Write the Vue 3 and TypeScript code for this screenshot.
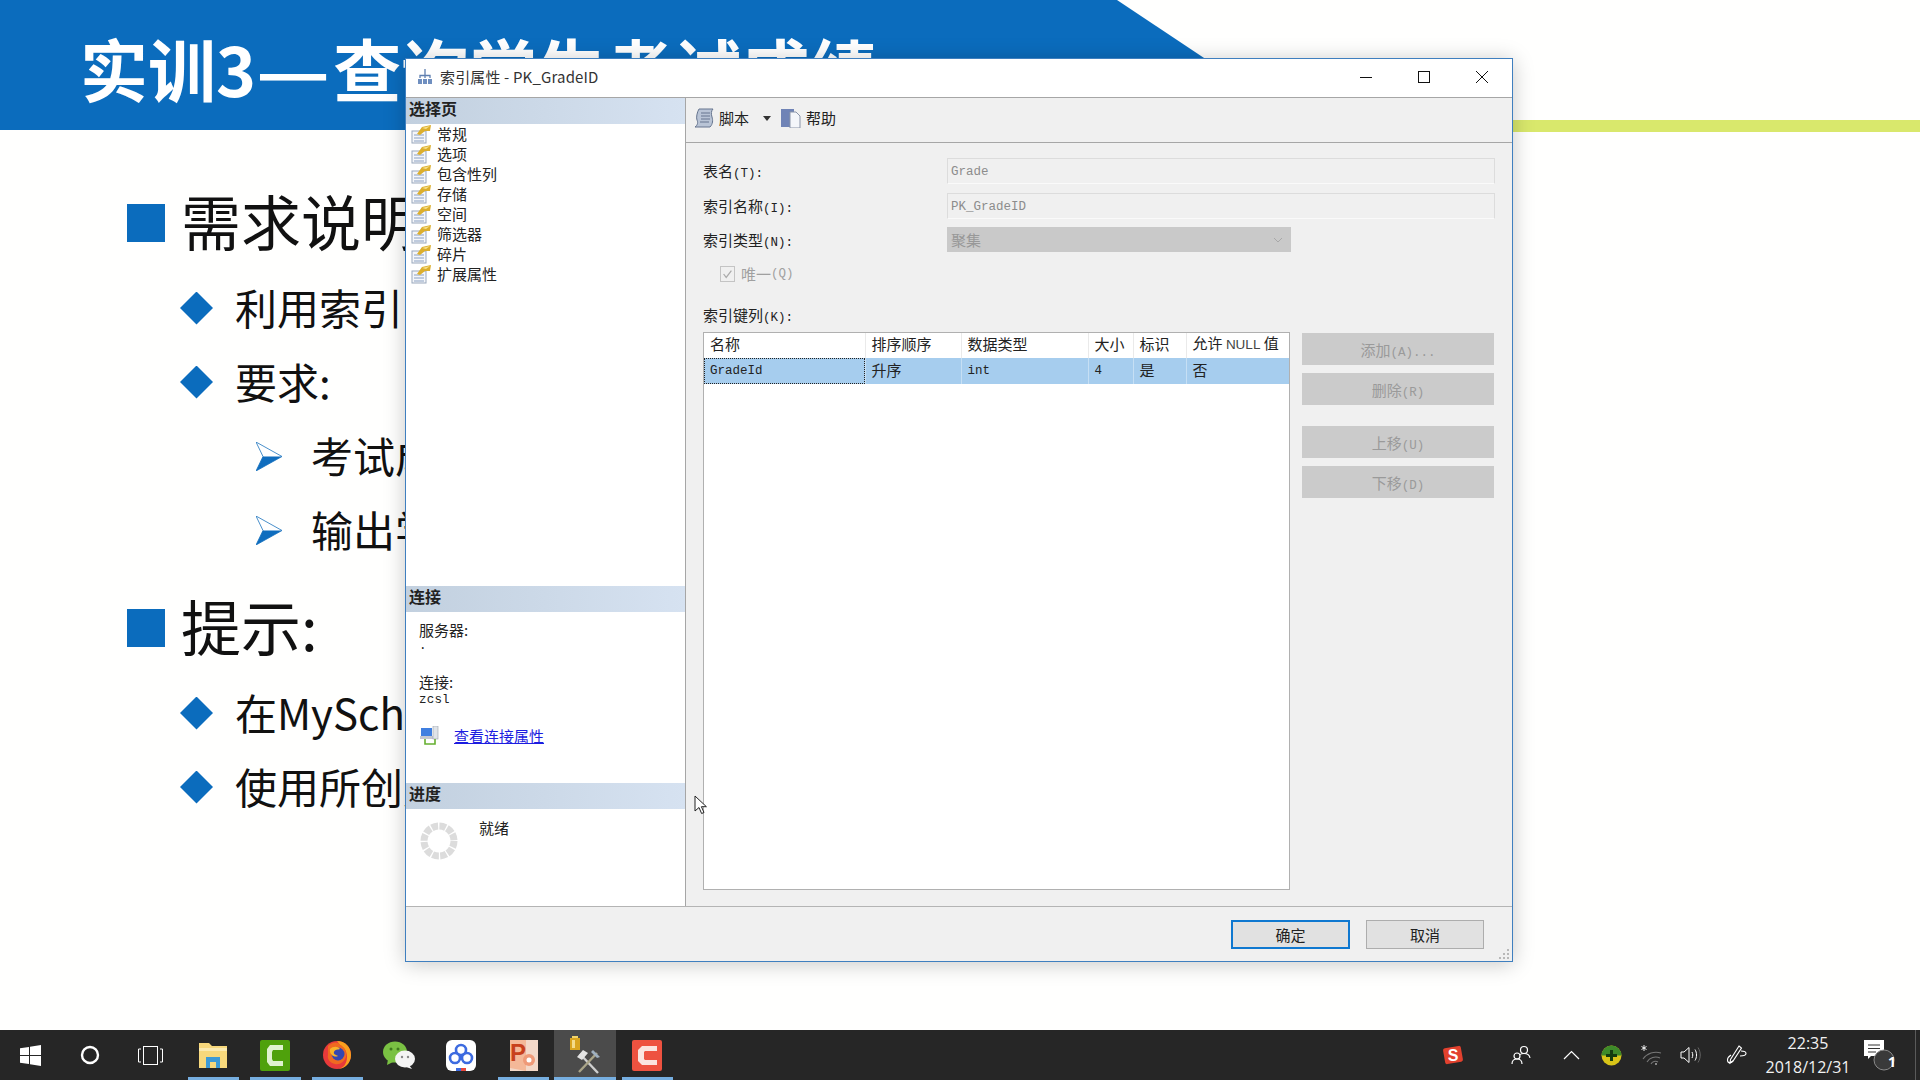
<script setup lang="ts">
interface Line { text: string; level: number }

const lines: Line[] = [
  { text: '需求说明', level: 1 },
  { text: '利用索引', level: 2 },
  { text: '要求:', level: 2 },
  { text: '考试成绩', level: 3 },
  { text: '输出学生', level: 3 },
  { text: '提示:', level: 1 },
  { text: '在MySchool', level: 2 },
  { text: '使用所创建', level: 2 },
]

const pages = ['常规', '选项', '包含性列', '存储', '空间', '筛选器', '碎片', '扩展属性']

const fields = [
  { label: '表名', key: '(T):', value: 'Grade' },
  { label: '索引名称', key: '(I):', value: 'PK_GradeID' },
]

const columns = ['名称', '排序顺序', '数据类型', '大小', '标识']
const sideButtons = [
  { text: '添加', key: '(A)...', gap: false },
  { text: '删除', key: '(R)', gap: false },
  { text: '上移', key: '(U)', gap: true },
  { text: '下移', key: '(D)', gap: false },
]
</script>

<template>
  <div class="screen">
    <main class="desk">
      <header class="head">
        <div class="lime"></div>
        <div class="blue">
          <h1>实训3<span class="dash">—</span>查询学生考试成绩</h1>
        </div>
      </header>

      <section class="slide">
        <div v-for="l in lines" :key="l.text" class="line" :class="'lv' + l.level">
          <span v-if="l.level === 1" class="mark-square"></span>
          <span v-else-if="l.level === 2" class="mark-diamond"></span>
          <svg v-else class="mark-arrow" viewBox="0 0 26 29">
            <path d="M0 0 L26 14.5 L0 29 L7 14.5 Z" fill="#fff" stroke="#1a72bd" stroke-width=".8" />
            <path d="M26 14.5 L0 29 L7 14.5 Z" fill="#0f6dbe" />
          </svg>
          <span class="line-text">{{ l.text }}</span>
        </div>
      </section>

      <div class="win">
        <div class="titlebar">
          <svg class="title-icon" viewBox="0 0 16 16">
            <path d="M8 0v6M3 9V6.500h10V9M8 6v3" fill="none" stroke="#5f7fb0" stroke-width="1.300" />
            <rect x="1" y="10" width="4" height="5" fill="#6f8fc0" />
            <rect x="6" y="10" width="4" height="5" fill="#6f8fc0" />
            <rect x="11" y="10" width="4" height="5" fill="#6f8fc0" />
          </svg>
          <span class="title-text">索引属性 - PK_GradeID</span>
          <div class="win-ctrls">
            <svg viewBox="0 0 12 12"><path d="M0 6.500h12" stroke="#111" fill="none" /></svg>
            <svg viewBox="0 0 12 12"><rect x=".5" y=".5" width="11" height="11" stroke="#111" fill="none" /></svg>
            <svg viewBox="0 0 12 12"><path d="M0 0l12 12M12 0L0 12" stroke="#111" fill="none" /></svg>
          </div>
        </div>

        <div class="win-body">
          <aside class="left">
            <div class="sec sec-pages">
              <div class="sec-head">选择页</div>
              <ul class="pages">
                <li v-for="p in pages" :key="p">
                  <svg class="page-icon" viewBox="0 0 20 20">
                    <rect x="1" y="7" width="14" height="12" fill="#f4f6fa" stroke="#9aa8bc" />
                    <path d="M3 11h10M3 14h10M3 17h10" stroke="#8aa0c0" />
                    <path d="M6 10 L11 3 L20 1 L19 7 L14 7 L9 11 Z" fill="#dcae2c" />
                    <path d="M11 4 L19 2 L15 5 Z" fill="#f6e08c" />
                  </svg>
                  <span>{{ p }}</span>
                </li>
              </ul>
            </div>

            <div class="sec sec-conn">
              <div class="sec-head">连接</div>
              <div class="conn">
                <div class="conn-label">服务器:</div>
                <div class="conn-value">.</div>
                <div class="conn-label conn-second">连接:</div>
                <div class="conn-value">zcsl</div>
                <div class="conn-link">
                  <svg viewBox="0 0 20 20">
                    <rect x="1" y="2" width="11" height="8" fill="#3f7fe0" />
                    <rect x="0" y="10" width="13" height="3" fill="#c4c8d0" />
                    <rect x="13" y="0" width="5" height="13" fill="#dfe3e8" stroke="#9aa0a8" stroke-width=".6" />
                    <path d="M5 13v5h10v-5" fill="none" stroke="#66b030" stroke-width="1.600" />
                  </svg>
                  <a>查看连接属性</a>
                </div>
              </div>
            </div>

            <div class="sec sec-prog">
              <div class="sec-head">进度</div>
              <div class="prog">
                <svg class="spinner" viewBox="0 0 38 38">
                  <circle cx="19" cy="19" r="15" fill="none" stroke="#dcdcdc" stroke-width="7" stroke-dasharray="6.500 1.350" />
                </svg>
                <span>就绪</span>
              </div>
            </div>
          </aside>

          <div class="right">
            <div class="toolbar">
              <svg class="tool-icon" viewBox="0 0 20 20">
                <path d="M5 1h14c-2 2-2 5-1 8s1 7-2 10H1c3-2 3-5 2-7S3 4 5 1z" fill="#b9c4d6" stroke="#66758f" />
                <path d="M7 5h9M7 8h9M7 11h9M6 14h9" stroke="#66758f" />
              </svg>
              <span>脚本</span>
              <i class="caret"></i>
              <svg class="tool-icon help-icon" viewBox="0 0 20 20">
                <rect x="0" y="1" width="13" height="18" fill="#6f83b6" />
                <path d="M9 4h6l4 4v12H9z" fill="#f4f6fa" stroke="#8a94a8" />
              </svg>
              <span>帮助</span>
            </div>

            <div class="form">
              <div class="fields">
                <template v-for="f in fields" :key="f.label">
                  <label>{{ f.label }}<span class="lat">{{ f.key }}</span></label>
                  <div class="input"><span class="lat">{{ f.value }}</span></div>
                </template>
                <label>索引类型<span class="lat">(N):</span></label>
                <div class="select">
                  <span>聚集</span>
                  <svg viewBox="0 0 10 6"><path d="M1 1l4 4 4-4" fill="none" stroke="#a8a8a8" /></svg>
                </div>
              </div>

              <div class="unique">
                <span class="check">
                  <svg viewBox="0 0 15 16"><path d="M3 8l3 4 6-8" fill="none" stroke="#aaa" stroke-width="1.400" /></svg>
                </span>
                唯一<span class="lat">(Q)</span>
              </div>

              <label class="keys-label">索引键列<span class="lat">(K):</span></label>

              <div class="keys">
                <div class="grid-box">
                  <table>
                    <colgroup>
                      <col style="width: 161px" />
                      <col style="width: 96px" />
                      <col style="width: 127px" />
                      <col style="width: 45px" />
                      <col style="width: 53px" />
                      <col />
                    </colgroup>
                    <thead>
                      <tr>
                        <th v-for="c in columns" :key="c">{{ c }}</th>
                        <th>允许 <span class="null">NULL</span> 值</th>
                      </tr>
                    </thead>
                    <tbody>
                      <tr>
                        <td class="focus"><span class="lat">GradeId</span></td>
                        <td>升序</td>
                        <td><span class="lat">int</span></td>
                        <td><span class="lat">4</span></td>
                        <td>是</td>
                        <td>否</td>
                      </tr>
                    </tbody>
                  </table>
                </div>
                <div class="side">
                  <button v-for="b in sideButtons" :key="b.text" :class="{ spaced: b.gap }">
                    {{ b.text }}<span class="lat">{{ b.key }}</span>
                  </button>
                </div>
              </div>
            </div>
          </div>
        </div>

        <footer class="win-foot">
          <button class="primary">确定</button>
          <button>取消</button>
          <svg class="grip" viewBox="0 0 12 12">
            <path d="M9 1h2v2H9zM5 5h2v2H5zM9 5h2v2H9zM1 9h2v2H1zM5 9h2v2H5zM9 9h2v2H9z" fill="#b8b8b8" />
          </svg>
        </footer>

        <svg class="pointer" viewBox="0 0 13 20">
          <path d="M1 1v15l4-3.500 2.600 6 2.400-1-2.600-5.800 5 0z" fill="#fff" stroke="#222" />
        </svg>
      </div>
    </main>

    <nav class="taskbar">
      <div class="tb sys">
        <svg width="21" height="21" viewBox="0 0 21 21">
          <path d="M0 3.200L9 2v8H0zM10 1.800L21 0v10H10zM0 11h9v8L0 17.800zM10 11h11v10l-11-1.800z" fill="#fff" />
        </svg>
      </div>
      <div class="tb sys">
        <svg width="20" height="20" viewBox="0 0 20 20"><circle cx="10" cy="10" r="8" fill="none" stroke="#fff" stroke-width="2.400" /></svg>
      </div>
      <div class="tb sys">
        <svg width="25" height="19" viewBox="0 0 25 19">
          <rect x="5.500" y=".5" width="14" height="18" fill="none" stroke="#fff" />
          <path d="M3 3H.5v13H3M22 3h2.500v13H22" fill="none" stroke="#fff" />
        </svg>
      </div>

      <div class="tb on">
        <svg width="30" height="30" viewBox="0 0 30 30">
          <path d="M1 3h10l3 3h15v22H1z" fill="#f7d87c" />
          <path d="M1 8h28v3H1z" fill="#fbeab0" />
          <path d="M8 17h14v11h-4v-6h-6v6H8z" fill="#3d9ad6" />
        </svg>
      </div>
      <div class="tb on">
        <svg width="30" height="31" viewBox="0 0 30 31">
          <rect width="30" height="31" rx="2" fill="#4fa10c" />
          <path d="M23 5H10L7 9v13l3 4h13v-5H13l-1-2v-7l1-2h10z" fill="#dff2cf" />
        </svg>
      </div>
      <div class="tb on">
        <svg width="30" height="30" viewBox="0 0 30 30">
          <circle cx="15" cy="15" r="14" fill="#e83a3a" />
          <path d="M15 1c8 0 14 6 14 14S23 29 15 29c6 0 10-5 10-12 0-6-3-10-7-12z" fill="#f9a01e" />
          <path d="M6 6c4-4 10-5 12-1 4 2 7 6 6 12-2 5-6 8-11 7-5-1-8-5-7-9z" fill="#f06a20" />
          <circle cx="16" cy="14" r="6.500" fill="#3446b0" />
          <path d="M8 9c3-3 8-3 10 0-2 1-5 0-6 3-1 2 2 3 4 4-3 2-9-1-8-7z" fill="#f9b32a" />
        </svg>
      </div>
      <div class="tb on-none">
        <svg width="32" height="28" viewBox="0 0 32 28">
          <ellipse cx="12" cy="11" rx="12" ry="10.500" fill="#7ac143" />
          <path d="M5 18l-1 6 6-3z" fill="#7ac143" />
          <circle cx="8" cy="8" r="1.500" fill="#3f7a1e" />
          <circle cx="15" cy="8" r="1.500" fill="#3f7a1e" />
          <ellipse cx="22" cy="18" rx="10" ry="8.500" fill="#f4f4f4" />
          <path d="M26 24l3 4-6-2z" fill="#f4f4f4" />
          <circle cx="19" cy="16" r="1.200" fill="#888" />
          <circle cx="25" cy="16" r="1.200" fill="#888" />
        </svg>
      </div>
      <div class="tb on-none">
        <svg width="30" height="31" viewBox="0 0 30 31">
          <rect width="30" height="31" rx="6" fill="#fff" />
          <circle cx="9" cy="18" r="5" fill="none" stroke="#3d6be0" stroke-width="2.600" />
          <circle cx="21" cy="18" r="5" fill="none" stroke="#3d6be0" stroke-width="2.600" />
          <circle cx="15" cy="10" r="5" fill="none" stroke="#3d6be0" stroke-width="2.600" />
          <path d="M10 28h5v3h-5z" fill="#3d6be0" />
          <path d="M15 28h5v3h-5z" fill="#e8483a" />
        </svg>
      </div>
      <div class="tb on">
        <svg width="30" height="31" viewBox="0 0 30 31">
          <rect x="2" y="0" width="28" height="31" fill="#f3d8c8" />
          <path d="M2 0h16v31L2 28z" fill="#f4b898" />
          <text x="2" y="21" class="ppt-p">P</text>
          <circle cx="21" cy="20" r="6" fill="#ef9a78" />
          <circle cx="21" cy="20" r="2.500" fill="#fff" />
        </svg>
      </div>
      <div class="tb on tools">
        <svg width="32" height="38" viewBox="0 0 32 38">
          <path d="M1 2h10v12H1z" fill="#d9a520" />
          <path d="M3 0h6v2H3z" fill="#f2d46a" />
          <path d="M3 4h3v8H3z" fill="#f4dc8a" />
          <path d="M11 18l18 19" stroke="#cfcfcf" stroke-width="2.400" />
          <path d="M28 17L10 36" stroke="#a9a488" stroke-width="2.400" />
          <path d="M8 21l6-7 5 3-6 7z" fill="#e4e4e4" />
          <path d="M24 14l7 7-3 1-6-6z" fill="#9fb0c0" />
        </svg>
      </div>
      <div class="tb on">
        <svg width="30" height="31" viewBox="0 0 30 31">
          <rect width="30" height="31" rx="2" fill="#ee5240" />
          <path d="M25 6H10L6 10v11l4 4h15v-5H13l-1-1v-7l1-1h12z" fill="#fbe4df" />
        </svg>
      </div>

      <div class="tray">
        <div class="t">
          <svg width="22" height="20" viewBox="0 0 22 20">
            <rect x="2" y="2" width="18" height="16" rx="2" transform="rotate(-10 11 10)" fill="#e2412e" />
            <text x="11" y="15.500" class="sogou">S</text>
          </svg>
        </div>
        <div class="t people">
          <svg width="20" height="20" viewBox="0 0 20 20" fill="none" stroke="#fff" stroke-width="1.200">
            <circle cx="13" cy="5" r="3.500" />
            <path d="M7 13c0-3 3-4.500 6-4.500s5.500 1.500 6 4.500" />
            <circle cx="6" cy="11" r="3" fill="#262626" />
            <path d="M1 19c0-3 2-5 5-5s5 2 5 5" />
          </svg>
        </div>
        <div class="t chevron">
          <svg width="17" height="10" viewBox="0 0 17 10"><path d="M1 9l7.500-7.500L16 9" fill="none" stroke="#fff" stroke-width="1.200" /></svg>
        </div>
        <div class="t">
          <svg width="21" height="21" viewBox="0 0 21 21">
            <circle cx="10.500" cy="10.500" r="10" fill="#d8c418" />
            <path d="M10.500 .5a10 10 0 0 1 10 10H.5a10 10 0 0 1 10-10z" fill="#3d8a2a" />
            <path d="M9 5h3v4h4v3h-4v4H9v-4H5V9h4z" fill="#123b10" />
          </svg>
        </div>
        <div class="t wifi">
          <svg width="22" height="22" viewBox="0 0 22 22" fill="none" stroke="#777" stroke-width="1.100">
            <path d="M2 15a16 16 0 0 1 18-6" />
            <path d="M6 18a10 10 0 0 1 13-4" />
            <path d="M10 20a5 5 0 0 1 7-2" />
            <circle cx="15" cy="20" r="1" fill="#aaa" stroke="none" />
            <path d="M3 1v6M.500 2.500l5 3M5.500 2.500l-5 3" stroke="#fff" stroke-width=".9" />
          </svg>
        </div>
        <div class="t speaker">
          <svg width="21" height="18" viewBox="0 0 21 18" fill="none" stroke="#fff" stroke-width="1">
            <path d="M1 6h3l5-4.500v15L4 12H1z" />
            <path d="M12 6c1 2 1 4 0 6" />
            <path d="M15 3.500c2 3 2 8 0 11" />
            <path d="M18 1.500c3 5 3 10 0 15" stroke="#666" />
          </svg>
        </div>
        <div class="t pen">
          <svg width="21" height="22" viewBox="0 0 21 22" fill="none" stroke="#fff" stroke-width="1.100">
            <path d="M13 2l2.500 2L7 17l-3 2 .5-3.500z" />
            <path d="M15 7c3 0 5 1 5 2.500S17 12 14 12" />
            <path d="M5 11c-3 2-4 5-3 7 1 1 3 1 5-1" />
          </svg>
        </div>
        <div class="clock">
          <span>22:35</span>
          <span>2018/12/31</span>
        </div>
        <div class="t note">
          <svg width="34" height="36" viewBox="0 0 34 36">
            <path d="M2 3h20v16H9l-3 3v-3H2z" fill="#fff" />
            <path d="M6 8h12M6 11.500h12M6 15h8" stroke="#333" />
            <circle cx="22" cy="23" r="10" fill="#3a3a3a" stroke="#8a8a8a" />
          </svg>
          <b>1</b>
        </div>
        <div class="peek"></div>
      </div>
    </nav>
  </div>
</template>

<style>
html,
body {
  margin: 0;
  background: #fff;
}
</style>

<style scoped>
.screen {
  width: 1920px;
  height: 1080px;
  display: flex;
  flex-direction: column;
  overflow: hidden;
  font-family: "Noto Sans CJK SC", sans-serif;
}

.desk {
  position: relative;
  height: 1030px;
  background: #fffffe;
}

/* slide */
.head {
  position: relative;
  height: 130px;
}
.lime {
  position: absolute;
  top: 120px;
  left: 1200px;
  right: 0;
  height: 12px;
  background: #d9e86c;
}
.blue {
  position: relative;
  width: 1400px;
  height: 130px;
  background: #0b6cbd;
  clip-path: polygon(0 0, 1117px 0, 1312px 130px, 0 130px);
  padding: 8px 0 0 80px;
  box-sizing: border-box;
}
.blue h1 {
  margin: 0;
  color: #fff;
  font-size: 68px;
  line-height: 120px;
  font-weight: 700;
  white-space: nowrap;
}
.dash {
  display: inline-block;
  width: 77px;
  transform: scaleX(1.2);
  transform-origin: left center;
}
.slide {
  padding: 63px 0 0 127px;
}
.line {
  display: flex;
  align-items: center;
  height: 60px;
  color: #111;
  white-space: nowrap;
}
.lv1 {
  margin-top: 38px;
  font-size: 60px;
}
.lv1:first-child {
  margin-top: 0;
}
.lv2 {
  margin-top: 14px;
  margin-left: 53px;
  font-size: 42px;
}
.lv1 + .lv2 {
  margin-top: 25px;
}
.lv3 {
  margin-top: 14px;
  margin-left: 129px;
  font-size: 42px;
}
.line-text {
  line-height: 60px;
  margin-top: -2px;
}
.lv1 .line-text {
  margin-top: -6px;
}
.mark-square {
  width: 38px;
  height: 38px;
  background: #0b6cbd;
  margin-right: 16px;
}
.mark-diamond {
  width: 33px;
  height: 33px;
  background: #0b6cbd;
  clip-path: polygon(50% 0, 100% 50%, 50% 100%, 0 50%);
  margin-right: 22px;
}
.mark-arrow {
  width: 26px;
  height: 29px;
  margin-right: 29px;
}

/* dialog */
.win {
  position: absolute;
  left: 405px;
  top: 58px;
  width: 1108px;
  height: 904px;
  box-sizing: border-box;
  border: 1px solid #3f7fbf;
  background: #f0f0f0;
  box-shadow: 0 2px 20px rgba(0, 0, 0, 0.22);
  display: flex;
  flex-direction: column;
  color: #222;
  font-size: 15px;
}
.lat {
  font-family: "Liberation Mono", monospace;
  font-size: 12.5px;
}
.titlebar {
  height: 39px;
  flex: none;
  box-sizing: border-box;
  padding-bottom: 3px;
  display: flex;
  align-items: center;
  background: #fff;
  border-bottom: 1px solid #a6a6a6;
}
.title-icon {
  width: 16px;
  height: 16px;
  margin-left: 11px;
}
.title-text {
  margin-left: 7px;
  font-size: 15px;
  letter-spacing: 0.15px;
  color: #333;
}
.win-ctrls {
  margin-left: auto;
  display: flex;
  align-items: center;
  gap: 46px;
  padding-right: 24px;
}
.win-ctrls svg {
  width: 12px;
  height: 12px;
  display: block;
}
.win-body {
  flex: 1;
  min-height: 0;
  display: flex;
}
.left {
  width: 280px;
  flex: none;
  box-sizing: border-box;
  background: #fff;
  border-right: 1px solid #a6a6a6;
  display: flex;
  flex-direction: column;
}
.sec-pages {
  height: 488px;
}
.sec-conn {
  height: 197px;
}
.sec-prog {
  flex: 1;
}
.sec-head {
  height: 26px;
  line-height: 20px;
  padding-left: 3px;
  font-size: 16px;
  font-weight: 700;
  color: #222;
  background: linear-gradient(90deg, #c2d0df, #d6e2f1);
}
.pages {
  list-style: none;
  margin: 0;
  padding: 0 0 0 5px;
}
.pages li {
  display: flex;
  align-items: center;
  height: 20px;
  line-height: 20px;
  gap: 6px;
}
.page-icon {
  width: 20px;
  height: 20px;
  flex: none;
}
.conn {
  padding: 8px 0 0 13px;
}
.conn-label {
  line-height: 20px;
}
.conn-second {
  margin-top: 19px;
}
.conn-value {
  font-family: "Liberation Mono", monospace;
  font-size: 12.5px;
  line-height: 13px;
  letter-spacing: 0.2px;
}
.conn-second + .conn-value {
  margin-top: 2px;
}
.conn-link {
  display: flex;
  align-items: center;
  gap: 14px;
  margin-top: 19px;
  margin-left: 1px;
}
.conn-link svg {
  width: 20px;
  height: 20px;
}
.conn-link a {
  color: #1c1ce0;
  text-decoration: underline;
  line-height: 20px;
}
.prog {
  display: flex;
  align-items: flex-start;
  padding: 9px 0 0 14px;
}
.prog span {
  margin-left: 21px;
  line-height: 20px;
}
.spinner {
  width: 38px;
  height: 38px;
  margin-top: 4px;
}
.right {
  flex: 1;
  min-width: 0;
  display: flex;
  flex-direction: column;
}
.toolbar {
  height: 45px;
  flex: none;
  box-sizing: border-box;
  border-bottom: 1px solid #a6a6a6;
  display: flex;
  align-items: center;
  padding: 0 0 4px 8px;
  line-height: 20px;
}
.tool-icon {
  width: 20px;
  height: 20px;
  margin-right: 5px;
}
.caret {
  width: 0;
  height: 0;
  border-left: 4.5px solid transparent;
  border-right: 4.5px solid transparent;
  border-top: 5px solid #333;
  margin: 0 10px 0 14px;
}
.form {
  flex: 1;
  min-height: 0;
  padding: 15px 17px 0 17px;
  display: flex;
  flex-direction: column;
}
.fields {
  display: grid;
  grid-template-columns: 244px 1fr;
  row-gap: 8.5px;
  align-items: center;
}
label {
  display: block;
  height: 20px;
  line-height: 20px;
}
.input {
  height: 26px;
  box-sizing: border-box;
  border: 1px solid #dcdcdc;
  border-bottom-color: #fafafa;
  padding-left: 3px;
  line-height: 20px;
  color: #8c8c8c;
}
.select {
  width: 344px;
  height: 25px;
  background: #c9c9c9;
  color: #989898;
  display: flex;
  align-items: center;
  justify-content: space-between;
  padding: 0 8px 0 4px;
  box-sizing: border-box;
  line-height: 20px;
}
.select svg {
  width: 10px;
  height: 6px;
}
.unique {
  display: flex;
  align-items: center;
  margin: 14px 0 0 17px;
  color: #a0a0a0;
  line-height: 16px;
  height: 16px;
}
.check {
  width: 15px;
  height: 16px;
  box-sizing: border-box;
  border: 1px solid #c4c4c4;
  margin-right: 6px;
  display: block;
}
.check svg {
  display: block;
  width: 13px;
  height: 14px;
}
.keys-label {
  margin-top: 23px;
}
.keys {
  margin-top: 7px;
  display: flex;
  gap: 12px;
}
.grid-box {
  width: 587px;
  height: 558px;
  box-sizing: border-box;
  background: #fff;
  border: 1px solid #b0b0b0;
}
table {
  width: 100%;
  table-layout: fixed;
  border-collapse: collapse;
  font-size: 15px;
}
th,
td {
  height: 25px;
  padding: 0 0 3px 6px;
  text-align: left;
  font-weight: 400;
  line-height: 20px;
  white-space: nowrap;
  overflow: hidden;
  box-sizing: border-box;
}
th {
  border-right: 1px solid #eaeaea;
}
th:last-child {
  border-right: 0;
}
tbody tr {
  background: #a6cdee;
}
td {
  border-right: 1px solid #c6dff4;
}
td:last-child {
  border-right: 0;
}
td.focus {
  outline: 1px dotted #222;
  outline-offset: -1px;
}
.null {
  font-family: "Liberation Sans", sans-serif;
  font-size: 13.5px;
  color: #444;
}
.side {
  width: 192px;
  display: flex;
  flex-direction: column;
  gap: 8px;
  padding-top: 1px;
}
.side button {
  height: 32px;
  border: 0;
  background: #cbcbcb;
  color: #9a9a9a;
  font: inherit;
  padding: 0;
}
.side button.spaced {
  margin-top: 13px;
}
.win-foot {
  position: relative;
  height: 55px;
  flex: none;
  box-sizing: border-box;
  border-top: 1px solid #b4b4b4;
  display: flex;
  justify-content: flex-end;
  gap: 16px;
  padding: 13px 28px 0 0;
}
.win-foot button {
  width: 118px;
  height: 29px;
  box-sizing: border-box;
  border: 1px solid #adadad;
  background: #e1e1e1;
  color: #222;
  font: inherit;
  padding: 0;
}
.win-foot button.primary {
  width: 119px;
  border: 2px solid #0f78d0;
}
.grip {
  position: absolute;
  right: 2px;
  bottom: 1px;
  width: 12px;
  height: 12px;
}
.pointer {
  position: absolute;
  left: 288px;
  top: 736px;
  width: 13px;
  height: 20px;
}

/* taskbar */
.taskbar {
  height: 50px;
  flex: none;
  background: #262626;
  display: flex;
  position: relative;
}
.tb {
  position: relative;
  width: 62px;
  height: 50px;
  display: flex;
  align-items: center;
  justify-content: center;
  flex: none;
}
.tb.sys {
  width: 60px;
}
.tb.sys:nth-child(3) {
  margin-right: 2px;
}
.tb.on::after {
  content: "";
  position: absolute;
  left: 6px;
  right: 5px;
  bottom: 0;
  height: 3px;
  background: #76aee0;
}
.tb.tools {
  background: #4b4b4b;
}
.tb.tools::after {
  left: 0;
  right: 0;
}
.ppt-p {
  font-family: "Liberation Sans", sans-serif;
  font-weight: 700;
  font-size: 24px;
  fill: #c8401c;
}
.sogou {
  font-family: "Liberation Sans", sans-serif;
  font-weight: 700;
  font-size: 16px;
  fill: #fff;
  text-anchor: middle;
}
.tray {
  margin-left: auto;
  width: 487px;
  display: flex;
  flex: none;
  color: #fff;
}
.t {
  position: relative;
  width: 40px;
  height: 50px;
  flex: none;
  display: flex;
  align-items: center;
  justify-content: center;
}
.people {
  margin-left: 28px;
}
.chevron {
  margin-left: 10px;
}
.wifi {
  width: 38px;
  margin-left: 2px;
}
.speaker {
  width: 38px;
}
.pen {
  margin-left: 7px;
}
.clock {
  width: 96px;
  margin-left: 4px;
  flex: none;
  display: flex;
  flex-direction: column;
  align-items: center;
  font-family: "Open Sans", sans-serif;
  font-size: 16px;
  line-height: 24px;
  padding-top: 1px;
  color: #f2f2f2;
}
.note {
  margin-left: 3px;
}
.note b {
  position: absolute;
  left: 23px;
  top: 22px;
  width: 20px;
  text-align: center;
  font-family: "Open Sans", sans-serif;
  font-size: 14px;
  line-height: 20px;
}
.peek {
  width: 5px;
  margin-left: 16px;
  border-left: 1px solid #5a5a5a;
  flex: none;
}
</style>
